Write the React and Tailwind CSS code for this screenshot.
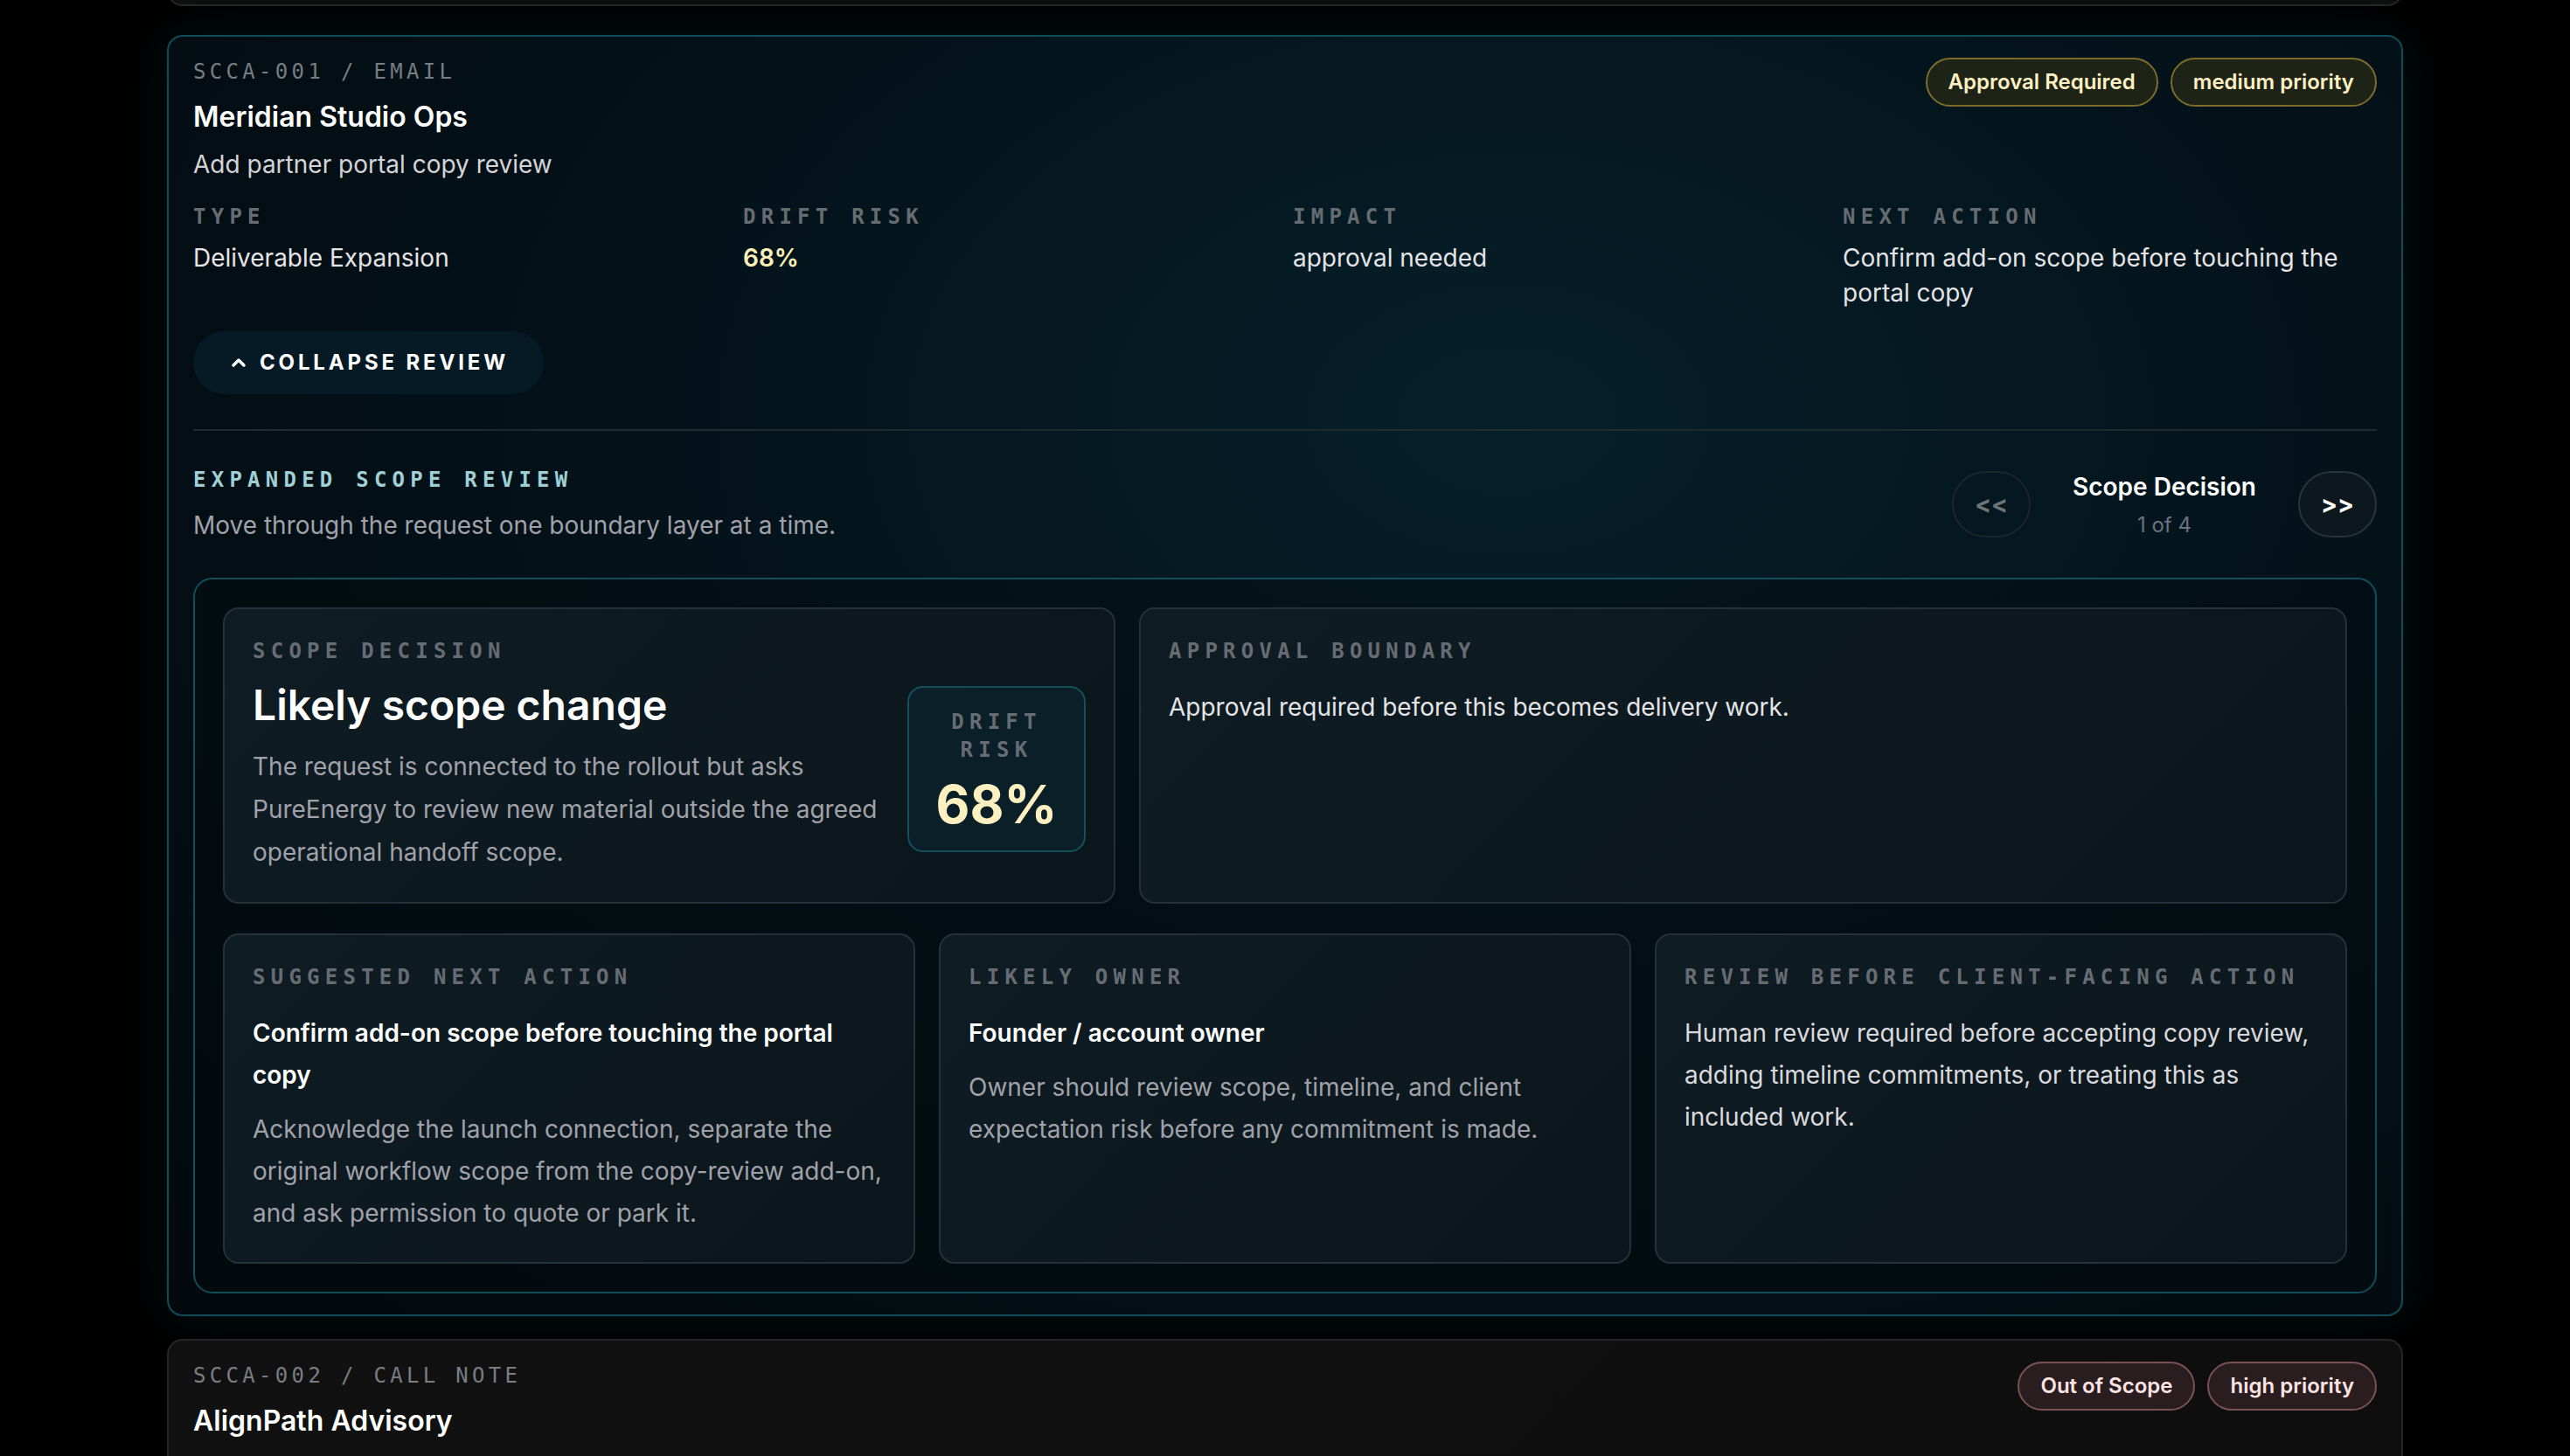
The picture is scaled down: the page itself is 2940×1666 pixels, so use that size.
import { ChevronUp } from "lucide-react";

const badgeTones = {
  amber: "border-[#7c6d2c] bg-[#1e2318] text-[#fdf0c2]",
  red: "border-[#7a5256] bg-[#2a1d1f] text-[#fde4e4]",
};

const Label = ({ children, className = "text-[#676c74]" }) => (
  <div
    className={`font-['DejaVu_Sans_Mono',monospace] text-[24px] leading-[32px] font-bold tracking-[0.26em] uppercase ${className}`}
  >
    {children}
  </div>
);

const Badge = ({ tone, children }) => (
  <span
    className={`rounded-full border-2 px-6 py-[10px] text-[24px] leading-[32px] font-semibold whitespace-nowrap ${badgeTones[tone]}`}
  >
    {children}
  </span>
);

const RequestHeader = ({ code, client, title, badges }) => (
  <div className="flex items-start justify-between">
    <div>
      <div className="font-['DejaVu_Sans_Mono',monospace] text-[24px] leading-[32px] tracking-[0.18em] text-[#787d84] uppercase">
        {code}
      </div>
      <div className="mt-3 text-[32px] leading-[48px] font-semibold text-white">
        {client}
      </div>
      <div className="mt-2.5 text-[28px] leading-[40px] text-[#d4d4d8]">
        {title}
      </div>
    </div>
    <div className="flex gap-3.5">
      {badges.map((b) => (
        <Badge key={b.text} tone={b.tone}>
          {b.text}
        </Badge>
      ))}
    </div>
  </div>
);

const stats = [
  { label: "Type", value: "Deliverable Expansion" },
  { label: "Drift Risk", value: "68%", accent: true },
  { label: "Impact", value: "approval needed" },
  {
    label: "Next Action",
    value: "Confirm add-on scope before touching the portal copy",
  },
];

const cardClass =
  "rounded-[18px] border-2 border-[#25313a] bg-[linear-gradient(135deg,#0f1c23,#0b161c)] p-8";

const App = () => {
  return (
    <div className="min-h-screen overflow-hidden bg-black font-['Inter','Noto_Sans',sans-serif]">
      <div className="mx-auto w-[2558px] -mt-[194px] pb-20">
        {/* previous request, scrolled mostly out of view */}
        <div className="h-[201px] rounded-[18px] border-2 border-[#262626] bg-[#0f0f0f]" />

        {/* expanded request */}
        <div className="mt-[33px] rounded-[18px] border-2 border-[#0f4d58] bg-[radial-gradient(ellipse_at_60%_30%,#06202a_0%,#04121a_45%,#03090d_100%)] px-7 py-6 shadow-[0_0_60px_rgba(6,70,80,0.25)]">
          <RequestHeader
            code="SCCA-001 / Email"
            client="Meridian Studio Ops"
            title="Add partner portal copy review"
            badges={[
              { text: "Approval Required", tone: "amber" },
              { text: "medium priority", tone: "amber" },
            ]}
          />

          <div className="mt-6 grid grid-cols-4 gap-x-[18px]">
            {stats.map((s) => (
              <div key={s.label}>
                <Label className="text-[#676b72]">{s.label}</Label>
                <div
                  className={`mt-[11px] text-[28px] leading-[40px] ${
                    s.accent
                      ? "font-semibold text-[#fdefb8]"
                      : "text-[#e4e4e7]"
                  }`}
                >
                  {s.value}
                </div>
              </div>
            ))}
          </div>

          <button className="mt-6 flex h-[72px] items-center gap-3 rounded-full bg-[#051a24] px-10 text-[24px] font-bold tracking-[0.16em] text-white">
            <ChevronUp className="h-6 w-6" strokeWidth={3.5} />
            COLLAPSE REVIEW
          </button>

          <div className="mt-10 border-t-2 border-[#1f2b31] pt-10">
            <div className="flex items-center justify-between">
              <div>
                <Label className="text-[#9fd0d6]">Expanded Scope Review</Label>
                <div className="mt-4 text-[28px] leading-[40px] text-[#a1a1aa]">
                  Move through the request one boundary layer at a time.
                </div>
              </div>
              <div className="flex items-center gap-6">
                <button className="flex h-[76px] w-[90px] items-center justify-center rounded-full border-2 border-[#1b262b] text-[28px] font-bold text-[#6f7479]">
                  &lt;&lt;
                </button>
                <div className="w-[258px] text-center">
                  <div className="text-[28px] leading-[40px] font-semibold text-white">
                    Scope Decision
                  </div>
                  <div className="mt-2 text-[24px] leading-[32px] text-[#6b7280]">
                    1 of 4
                  </div>
                </div>
                <button className="flex h-[76px] w-[90px] items-center justify-center rounded-full border-2 border-[#2a3539] bg-[#0c181d] text-[28px] font-bold text-white">
                  &gt;&gt;
                </button>
              </div>
            </div>

            <div className="mt-10 rounded-[22px] border-2 border-[#0f4f5b] bg-[#03090d]/40 p-8">
              <div className="grid grid-cols-[1021fr_1382fr] gap-[27px]">
                <div className={cardClass}>
                  <Label>Scope Decision</Label>
                  <div className="mt-4 flex items-start gap-8">
                    <div className="min-w-0 flex-1">
                      <div className="text-[48px] leading-[60px] font-semibold text-white">
                        Likely scope change
                      </div>
                      <p className="mt-4 text-[28px] leading-[49px] text-[#a1a1aa]">
                        The request is connected to the rollout but asks
                        PureEnergy to review new material outside the agreed
                        operational handoff scope.
                      </p>
                    </div>
                    <div className="mt-2 w-[204px] shrink-0 rounded-[18px] border-2 border-[#11505c] bg-[#0a1f28] p-[23px] text-center">
                      <Label>Drift Risk</Label>
                      <div className="mt-4 text-[60px] leading-none font-bold text-[#fdf0c0]">
                        68%
                      </div>
                    </div>
                  </div>
                </div>
                <div className={cardClass}>
                  <Label>Approval Boundary</Label>
                  <div className="mt-6 text-[28px] leading-[48px] text-[#e4e4e7]">
                    Approval required before this becomes delivery work.
                  </div>
                </div>
              </div>

              <div className="mt-[34px] grid grid-cols-3 gap-[27px]">
                <div className={cardClass}>
                  <Label>Suggested Next Action</Label>
                  <div className="mt-6 text-[28px] leading-[48px] font-semibold text-white">
                    Confirm add-on scope before touching the portal copy
                  </div>
                  <p className="mt-3.5 text-[28px] leading-[48px] text-[#a1a1aa]">
                    Acknowledge the launch connection, separate the original
                    workflow scope from the copy-review add-on, and ask
                    permission to quote or park it.
                  </p>
                </div>
                <div className={cardClass}>
                  <Label>Likely Owner</Label>
                  <div className="mt-6 text-[28px] leading-[48px] font-semibold text-white">
                    Founder / account owner
                  </div>
                  <p className="mt-3.5 text-[28px] leading-[48px] text-[#a1a1aa]">
                    Owner should review scope, timeline, and client expectation
                    risk before any commitment is made.
                  </p>
                </div>
                <div className={cardClass}>
                  <Label>Review Before Client-Facing Action</Label>
                  <div className="mt-6 text-[28px] leading-[48px] text-[#d9d9de]">
                    Human review required before accepting copy review, adding
                    timeline commitments, or treating this as included work.
                  </div>
                </div>
              </div>
            </div>
          </div>
        </div>

        {/* next request */}
        <div className="mt-[26px] rounded-[18px] border-2 border-[#262626] bg-[linear-gradient(135deg,#111111,#0e0e0e)] px-7 py-6">
          <RequestHeader
            code="SCCA-002 / Call Note"
            client="AlignPath Advisory"
            title="Include steering committee alignment workshop"
            badges={[
              { text: "Out of Scope", tone: "red" },
              { text: "high priority", tone: "red" },
            ]}
          />
        </div>
      </div>
    </div>
  );
};

export default App;
